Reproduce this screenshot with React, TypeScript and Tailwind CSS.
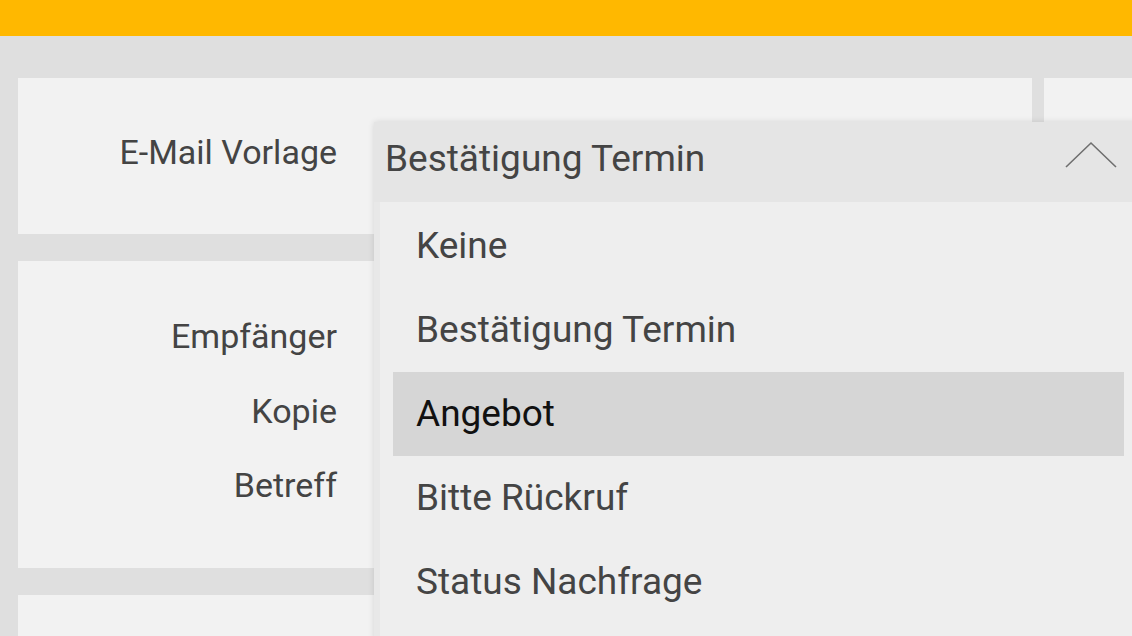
const OPTIONS = ['Keine', 'Bestätigung Termin', 'Angebot', 'Bitte Rückruf', 'Status Nachfrage'];
const SELECTED = 'Angebot';

const FONT = "font-['Roboto',sans-serif]";

export default function App() {
  return (
    <div className={`relative h-[636px] w-[1132px] overflow-hidden bg-[#dfdfdf] ${FONT}`}>
      {/* Top bar */}
      <div className="h-[36px] bg-[#ffb800]" />

      <div className="flex gap-[12px] pl-[18px] pt-[42px]">
        <div className="flex w-[1014px] flex-col gap-[27px]">
          {/* Template card */}
          <div className="flex h-[156px] bg-[#f2f2f2] pt-[53px]">
            <div className="w-[319px] text-right text-[34px] leading-[42px] text-[#444]">E-Mail Vorlage</div>
          </div>

          {/* Mail fields card */}
          <div className="flex h-[307px] flex-col bg-[#f2f2f2] pt-[54px]">
            {['Empfänger', 'Kopie', 'Betreff'].map((label) => (
              <div key={label} className="h-[74.5px] w-[319px] text-right text-[34px] leading-[42px] text-[#444]">
                {label}
              </div>
            ))}
          </div>

          <div className="h-[60px] bg-[#f2f2f2]" />
        </div>

        <div className="h-[600px] flex-1 bg-[#f2f2f2]" />
      </div>

      {/* Open dropdown */}
      <div className="absolute left-[374px] top-[122px] w-[780px] shadow-[0_0_6px_rgba(0,0,0,0.12)]">
        <div className="flex h-[80px] items-start justify-between bg-[#e5e5e5] pl-[11px] pt-[15px]">
          <span className="text-[37px] leading-[44px] text-[#444]">Bestätigung Termin</span>
          <svg className="mr-[37px] mt-[3px] h-[30px] w-[52px]" viewBox="0 0 52 30" fill="none" aria-hidden="true">
            <path d="M1 27 L26 3 L51 27" stroke="#6f6f6f" strokeWidth="1.6" />
          </svg>
        </div>
        <div className="h-[440px] border-l-[6px] border-[#e8e8e8] bg-[#eeeeee] pl-[13px] pt-[2px]">
          {OPTIONS.map((opt) => (
            <div
              key={opt}
              className={`flex h-[84px] w-[731px] items-center pl-[23px] text-[37px] ${
                opt === SELECTED ? 'bg-[#d6d6d6] text-[#111]' : 'text-[#444]'
              }`}
            >
              {opt}
            </div>
          ))}
        </div>
      </div>
    </div>
  );
}
